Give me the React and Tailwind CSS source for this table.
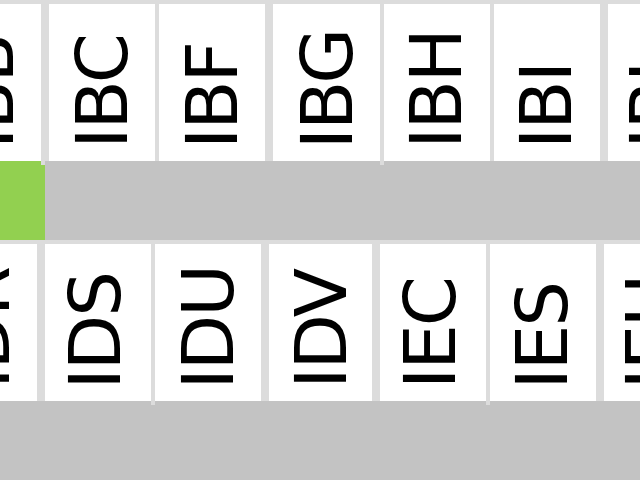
import React from "react";

// column headers, laid out as they sit in the scrolled grid
const topRow = [
  { code: "IBB", w: "w-[106px]", gap: "-ml-[65px]", nudge: "" },
  { code: "IBC", w: "w-[106px]", gap: "ml-[8px]", nudge: "" },
  { code: "IBF", w: "w-[106px]", gap: "ml-[4px]", nudge: "" },
  { code: "IBG", w: "w-[107px]", gap: "ml-[8px]", nudge: "" },
  { code: "IBH", w: "w-[106px]", gap: "ml-[4px]", nudge: "pr-[2px]" },
  { code: "IBI", w: "w-[106px]", gap: "ml-[4px]", nudge: "pr-[2px]" },
  { code: "IBL", w: "w-[106px]", gap: "ml-[8px]", nudge: "pr-[10px]" },
];

const bottomRow = [
  { code: "IDR", w: "w-[106px]", gap: "-ml-[69px]", nudge: "" },
  { code: "IDS", w: "w-[106px]", gap: "ml-[8px]", nudge: "pr-[6px]" },
  { code: "IDU", w: "w-[106px]", gap: "ml-[4px]", nudge: "" },
  { code: "IDV", w: "w-[103px]", gap: "ml-[8px]", nudge: "" },
  { code: "IEC", w: "w-[106px]", gap: "ml-[8px]", nudge: "pr-[6px]" },
  { code: "IES", w: "w-[106px]", gap: "ml-[4px]", nudge: "pr-[2px]" },
  { code: "IEU", w: "w-[106px]", gap: "ml-[8px]", nudge: "pr-[10px]" },
];

function HeaderCell({ code, w, gap, nudge }) {
  return (
    <div
      className={`flex h-full shrink-0 flex-col items-center justify-end bg-white pb-[12px] ${w} ${gap} ${nudge}`}
    >
      <span className="rotate-180 whitespace-nowrap text-[72px] leading-none tracking-[-2px] text-black [writing-mode:vertical-rl]">
        {code}
      </span>
    </div>
  );
}

function HeaderRow({ cells, stubs }) {
  return (
    <div className="relative flex h-[157px] bg-[#dcdcdc]">
      {cells.map((c) => (
        <HeaderCell key={c.code} {...c} />
      ))}
      {/* little bits of the grid lines that poke out under the row */}
      {stubs.map((left) => (
        <span
          key={left}
          className={`absolute top-full h-[4px] w-[4px] bg-[#dcdcdc] ${left}`}
        />
      ))}
    </div>
  );
}

export default function App() {
  return (
    <div className="h-[480px] w-[640px] overflow-hidden bg-[#c3c3c3] font-['DejaVu_Sans',sans-serif]">
      <div className="bg-[#dcdcdc] pt-[4px]">
        <HeaderRow cells={topRow} stubs={["left-[41px]", "left-[380px]"]} />
      </div>

      <div className="flex h-[79px]">
        <div className="w-[45px] bg-[#92d050]" />
      </div>

      <div className="bg-[#dcdcdc] pt-[4px]">
        <HeaderRow cells={bottomRow} stubs={["left-[151px]", "left-[486px]"]} />
      </div>

      <div className="h-[79px]" />
    </div>
  );
}
